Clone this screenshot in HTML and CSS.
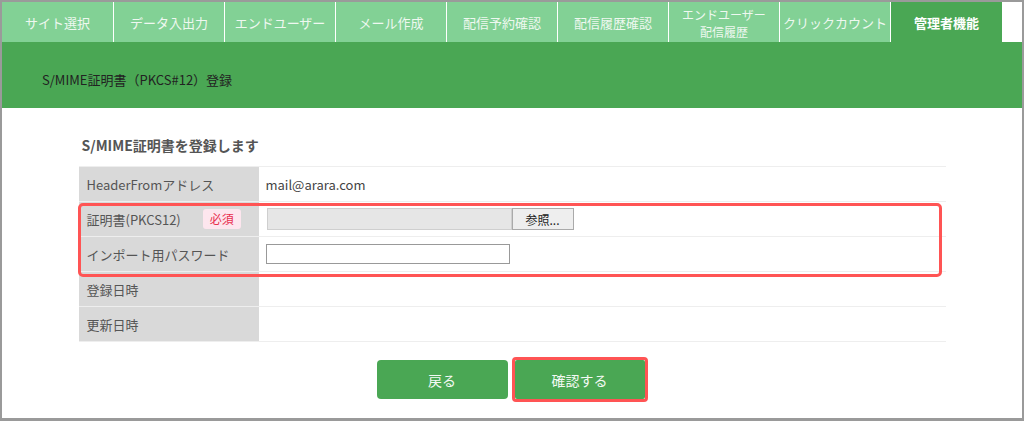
FILE: index.html
```html
<!DOCTYPE html>
<html lang="ja">
<head>
<meta charset="utf-8">
<title>S/MIME証明書（PKCS#12）登録</title>
<link rel="stylesheet" href="styles.css">
</head>
<body>
<div class="frame">
  <nav class="tabs">
    <div class="tab">サイト選択</div>
    <div class="tab">データ入出力</div>
    <div class="tab">エンドユーザー</div>
    <div class="tab">メール作成</div>
    <div class="tab">配信予約確認</div>
    <div class="tab">配信履歴確認</div>
    <div class="tab two">エンドユーザー<br>配信履歴</div>
    <div class="tab">クリックカウント</div>
    <div class="tab active">管理者機能</div>
    <div class="tab-rest"></div>
  </nav>
  <header class="page-head">S/MIME証明書（PKCS#12）登録</header>
  <main class="content">
    <h2 class="heading">S/MIME証明書を登録します</h2>
    <div class="form-wrap">
      <div class="form">
        <div class="row">
          <div class="label">HeaderFromアドレス</div>
          <div class="value">mail@arara.com</div>
        </div>
        <div class="row">
          <div class="label">証明書(PKCS12)<span class="req">必須</span></div>
          <div class="value"><span class="file"><span class="file-field"></span><span class="file-btn">参照...</span></span></div>
        </div>
        <div class="row">
          <div class="label">インポート用パスワード</div>
          <div class="value"><span class="pw"></span></div>
        </div>
        <div class="row">
          <div class="label">登録日時</div>
          <div class="value"></div>
        </div>
        <div class="row">
          <div class="label">更新日時</div>
          <div class="value"></div>
        </div>
      </div>
      <div class="highlight"></div>
    </div>
    <div class="actions">
      <button class="btn">戻る</button>
      <span class="btn-mark"><button class="btn">確認する</button></span>
    </div>
  </main>
</div>
</body>
</html>
```

FILE: styles.css
```css
* { box-sizing: border-box; }
html, body { margin: 0; padding: 0; background: #fff; }
body {
  font-family: "Noto Sans CJK JP", "Liberation Sans", sans-serif;
  font-size: 13px;
  color: #555;
}
.frame {
  width: 1024px;
  height: 421px;
  border: 2px solid #9a9a9a;
  border-bottom: 3px solid #9a9a9a;
  overflow: hidden;
  background: #fff;
}
.tabs {
  display: flex;
  height: 40px;
}
.tab {
  width: 110px;
  margin-right: 1px;
  background: #82d195;
  color: #eef8f0;
  display: flex;
  align-items: center;
  justify-content: center;
  text-align: center;
  font-size: 13px;
  line-height: 17px;
}
.tab.two { font-size: 12px; line-height: 17px; padding-top: 1px; }
.tab:first-child { width: 111px; }
.tab.active {
  background: #4aa754;
  color: #fff;
  font-weight: bold;
  width: 111px;
  margin-right: 0;
}
.tab-rest { flex: 1; background: #fff; }
.page-head {
  height: 66px;
  background: #4aa754;
  color: #222;
  font-size: 13px;
  display: flex;
  align-items: center;
  padding: 8px 0 0 40px;
}
.content { padding-top: 27px; }
.heading {
  width: 867px;
  margin: 0 auto 11px;
  padding-left: 3px;
  font-size: 14px;
  font-weight: bold;
  color: #555;
  line-height: 20px;
}
.form-wrap {
  position: relative;
  width: 867px;
  margin: 0 auto;
}
.form { border-top: 1px solid #eee; }
.row {
  display: grid;
  grid-template-columns: 180px 1fr;
  height: 35px;
  border-bottom: 1px solid #eee;
}
.label {
  background: #d9d9d9;
  display: flex;
  align-items: center;
  padding-left: 8px;
  color: #555;
}
.value {
  display: flex;
  align-items: center;
  padding-left: 7px;
  color: #444;
}
.req {
  margin-left: 22px;
  background: #fde6ee;
  color: #e8304e;
  font-size: 12px;
  border-radius: 3px;
  padding: 0 7px;
  line-height: 20px;
}
.file { display: flex; height: 22px; margin-left: 1px; }
.file-field {
  width: 245px;
  background: #e6e6e6;
  border: 1px solid #cfcfcf;
}
.file-btn {
  width: 62px;
  background: #eee;
  border: 1px solid #aaa;
  color: #222;
  font-size: 12px;
  display: flex;
  align-items: center;
  justify-content: center;
}
.pw {
  width: 244px;
  height: 20px;
  border: 1px solid #999;
  background: #fff;
}
.highlight {
  position: absolute;
  left: -1px;
  top: 37px;
  width: 864px;
  height: 74px;
  border: 3px solid #ff5454;
  border-radius: 5px;
  pointer-events: none;
}
.actions {
  display: flex;
  justify-content: center;
  align-items: center;
  gap: 4px;
  margin-top: 15px;
}
.btn {
  width: 131px;
  height: 39px;
  border: 0;
  border-radius: 4px;
  background: #4aa754;
  color: #f2f9f3;
  font-family: inherit;
  font-size: 14px;
  padding: 0;
}
.btn-mark {
  display: block;
  border: 3px solid #ff5454;
  border-radius: 4px;
  line-height: 0;
}
.btn-mark .btn { width: 130px; border-radius: 2px; }
```
